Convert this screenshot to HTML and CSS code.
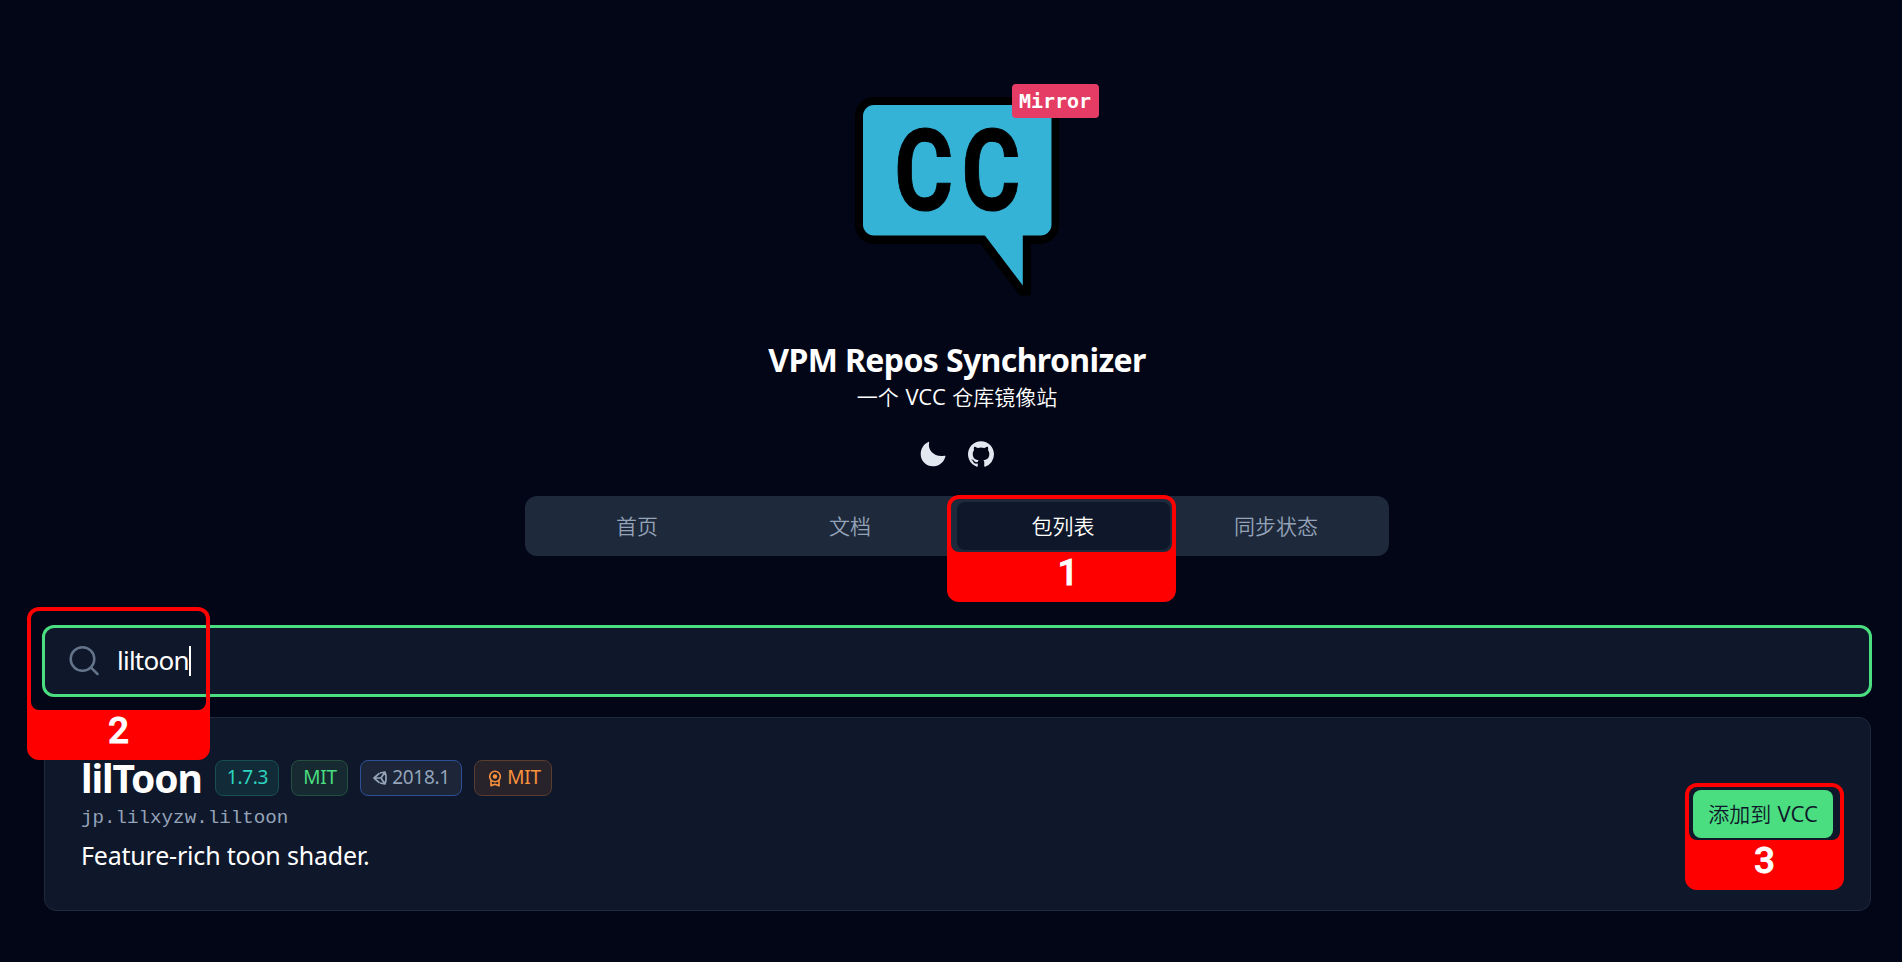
FILE: index.html
```html
<!DOCTYPE html>
<html lang="zh-CN">
<head>
<meta charset="utf-8">
<title>VPM Repos Synchronizer</title>
<link rel="stylesheet" href="styles.css">
</head>
<body>
<header class="hero">
  <div class="logo">
    <svg class="logo-art" width="206" height="200" viewBox="854 97 206 200">
      <rect x="855" y="97" width="204" height="147" rx="19"/>
      <path d="M979 242L1020 295.5H1031V240Z"/>
      <rect x="863" y="105" width="188.500" height="130.500" rx="11" fill="#34b3d6"/>
      <path d="M984.500 235L1022.800 285.500V235Z" fill="#34b3d6"/>
      <g class="logo-letters">
        <text x="894.300" y="209.500" textLength="59" lengthAdjust="spacingAndGlyphs">C</text>
        <text x="961.500" y="209.500" textLength="59" lengthAdjust="spacingAndGlyphs">C</text>
      </g>
    </svg>
    <span class="mirror">Mirror</span>
  </div>
  <h1 class="title"><span>VPM Repos Synchronizer</span></h1>
  <p class="subtitle">一个 <span class="latin">VCC</span> 仓库镜像站</p>
  <div class="links">
    <svg width="26" height="26" viewBox="0 0 26 26"><path d="M8.300 .9C8.900 .6 9.300 1 9.100 1.700C7.600 9.300 14.400 16.300 24.200 14.700C25.200 14.500 25.600 15 25.300 15.900C23.500 21.700 18.700 25.300 12.900 25.300C6.200 25.300 .7 19.900 .7 13.200C.7 7.700 3.600 3 8.300 .9Z" fill="#e2e8f0"/></svg>
    <svg width="26" height="26" viewBox="0 0 16 16"><path fill="#e2e8f0" d="M8 .2C3.580 .2 0 3.780 0 8.200c0 3.540 2.290 6.530 5.470 7.590.4.070.55-.17.55-.38 0-.19-.01-.82-.01-1.490-2.010.37-2.530-.49-2.690-.94-.09-.23-.48-.94-.82-1.130-.28-.15-.68-.52-.01-.53.630-.01 1.080.58 1.230.82.720 1.210 1.870.87 2.330.66.070-.52.280-.87.510-1.070-1.780-.2-3.640-.89-3.640-3.950 0-.87.310-1.590.82-2.150-.08-.2-.36-1.020.080-2.120 0 0 .67-.21 2.200.82a7.600 7.600 0 0 1 4 0c1.530-1.040 2.200-.82 2.200-.82.440 1.100.160 1.920.080 2.120.510.56.820 1.270.820 2.150 0 3.070-1.870 3.750-3.650 3.950.290.25.540.73.540 1.480 0 1.070-.01 1.930-.01 2.200 0 .21.150.46.550.38A8.010 8.010 0 0 0 16 8.200c0-4.420-3.580-8-8-8z"/></svg>
  </div>
</header>
<nav class="tabs">
  <a class="tab">首页</a>
  <a class="tab">文档</a>
  <a class="tab active">包列表<span class="mark mark-tab"><b>1</b></span></a>
  <a class="tab">同步状态</a>
</nav>
<main class="content">
  <div class="search">
    <svg class="search-icon" width="32" height="32" viewBox="0 0 32 32" fill="none" stroke="#64748b" stroke-width="2.500" stroke-linecap="round"><circle cx="13.500" cy="14" r="11.800"/><path d="M22.300 22.800L28.500 29"/></svg>
    <span class="query">liltoon</span><span class="caret"></span>
    <span class="mark mark-search"><b>2</b></span>
  </div>
  <article class="card">
    <div class="info">
      <div class="heading">
        <h2 class="name"><span>lilToon</span></h2>
        <span class="badge teal">1.7.3</span>
        <span class="badge green">MIT</span>
        <span class="badge blue"><svg width="14" height="14" viewBox="0 0 14 14" fill="none" stroke="currentColor" stroke-width="1.700" stroke-linejoin="round"><path d="M6.500 2.200L1 7L6.500 11.800M7 2L12 1L13.100 5.300M13.100 8.700L12 13L7 12M1.500 7H8L11.800 1.200M8 7L11.800 12.800M13 5V9"/></svg>2018.1</span>
        <span class="badge orange"><svg width="14" height="17" viewBox="0 0 14 17" fill="none" stroke="currentColor" stroke-width="1.600" stroke-linejoin="round"><circle cx="7" cy="6.500" r="5.300"/><circle cx="7" cy="6.500" r="2.200" fill="currentColor" stroke="none"/><path d="M3 10V15.800L7 14.200L11 15.800V10"/></svg>MIT</span>
      </div>
      <div class="package">jp.lilxyzw.liltoon</div>
      <div class="description"><span>Feature-rich toon shader.</span></div>
    </div>
    <button class="add">添加到 <span class="latin">VCC</span><span class="mark mark-add"><b>3</b></span></button>
  </article>
</main>
</body>
</html>
```
FILE: styles.css
```css
* { box-sizing: border-box; }
body {
  margin: 0;
  height: 962px;
  padding: 97px 31px 0 42px;
  overflow: hidden;
  display: flex;
  flex-direction: column;
  background: #020617;
  color: #fff;
  font-family: "Noto Sans", "Noto Sans CJK SC", sans-serif;
}
.hero { display: flex; flex-direction: column; align-items: center; height: 399px; }
.logo { position: relative; width: 206px; height: 200px; }
.logo-art { display: block; }
.logo-letters { font: 700 114px Roboto, sans-serif; stroke: #000; stroke-width: 1; }
.mirror {
  position: absolute;
  left: 158px;
  top: -13px;
  width: 87px;
  height: 34px;
  border-radius: 4px;
  background: #e53c65;
  font: 700 20px/35px "DejaVu Sans Mono", monospace;
  text-align: center;
}
.title { margin: 42px 0 0 1px; font-size: 32px; line-height: 42px; font-weight: 700; letter-spacing: -.62px; white-space: nowrap; }
.subtitle { margin: -2px 0 0 1px; font: 350 21px/34px "Noto Sans CJK SC", sans-serif; word-spacing: 2px; white-space: nowrap; }
.subtitle .latin, .add .latin { font: 400 22px/30px "Open Sans", sans-serif; letter-spacing: -.2px; }
.links { display: flex; gap: 22px; margin: 28px 0 0 1px; }
.tabs {
  display: grid;
  grid-template-columns: repeat(4, 1fr);
  align-self: center;
  width: 864px;
  height: 60px;
  padding: 6px;
  border-radius: 12px;
  background: #1e293b;
}
.tab {
  position: relative;
  display: flex;
  align-items: center;
  justify-content: center;
  height: 48px;
  padding-bottom: 2px;
  border-radius: 8px;
  color: #94a3b8;
  font: 350 21px/46px "Noto Sans CJK SC", sans-serif;
}
.tab.active { background: #0f172a; color: #fff; }
.content { display: flex; flex-direction: column; gap: 20px; margin-top: 69px; }
.search {
  position: relative;
  display: flex;
  align-items: center;
  width: 1830px;
  height: 72px;
  padding-left: 24px;
  border: 3px solid #4ade80;
  border-radius: 12px;
  background: #0f172a;
  font-size: 26px;
}
.search-icon { margin-right: 16px; }
.query { letter-spacing: -.75px; line-height: 34px; padding-bottom: 3px; }
.caret { width: 2px; height: 30px; background: #fff; }
.card {
  display: flex;
  justify-content: space-between;
  margin-left: 2px;
  width: 1827px;
  height: 194px;
  padding: 35px 37px 0 36px;
  border: 1px solid #1e293b;
  border-radius: 12px;
  background: #0f172a;
}
.heading { display: flex; align-items: center; gap: 12px; height: 50px; }
.name { margin: 0; width: 122px; font-size: 39px; line-height: 34px; letter-spacing: -1.15px; white-space: nowrap; }
.badge {
  display: flex;
  align-items: center;
  justify-content: center;
  gap: 5px;
  height: 36px;
  padding: 0 0 2px 1px;
  border: 1px solid;
  border-radius: 8px;
  font-size: 19px;
  letter-spacing: -.3px;
  line-height: 32px;
}
.badge svg { position: relative; top: 1px; }
.teal { width: 64px; color: #2dd4bf; background: #122b38; border-color: #18504f; }
.green { width: 57px; color: #4ade80; background: #172a32; border-color: #24513f; }
.blue { width: 102px; color: #94a3b8; background: #1c2638; border-color: #2d509a; }
.orange { width: 78px; padding-left: 3px; color: #fb923c; background: #28232b; border-color: #593d2e; }
.package { margin-top: 2px; font: 19.2px/26px "Liberation Mono", monospace; color: #94a3b8; }
.description { margin-top: 6px; font-size: 25px; line-height: 36px; letter-spacing: -.2px; }
.add {
  position: relative;
  width: 140px;
  height: 48px;
  margin-top: 37px;
  padding: 0 0 2px;
  border: 0;
  border-radius: 8px;
  background: #4ade80;
  color: #0f172a;
  font: 350 21px/46px "Noto Sans CJK SC", sans-serif;
  word-spacing: 1.5px;
  white-space: nowrap;
}
.mark {
  position: absolute;
  z-index: 2;
  display: flex;
  align-items: flex-end;
  justify-content: center;
  border-radius: 12px;
  overflow: hidden;
}
.mark::before {
  content: "";
  position: absolute;
  inset: 4px 4px 50px;
  border-radius: 8px;
  box-shadow: 0 0 0 200px #f00;
}
.mark b { position: relative; height: 38px; margin-bottom: 10px; color: #fff; font: 500 37px/38px Roboto, sans-serif; -webkit-text-stroke: .8px #fff; }
.mark-tab { left: -10px; top: -7px; width: 229px; height: 107px; padding-left: 14px; }
.mark-search { left: -18px; top: -21px; width: 183px; height: 153px; }
.mark-add { left: -8px; top: -7px; width: 159px; height: 107px; }
```
